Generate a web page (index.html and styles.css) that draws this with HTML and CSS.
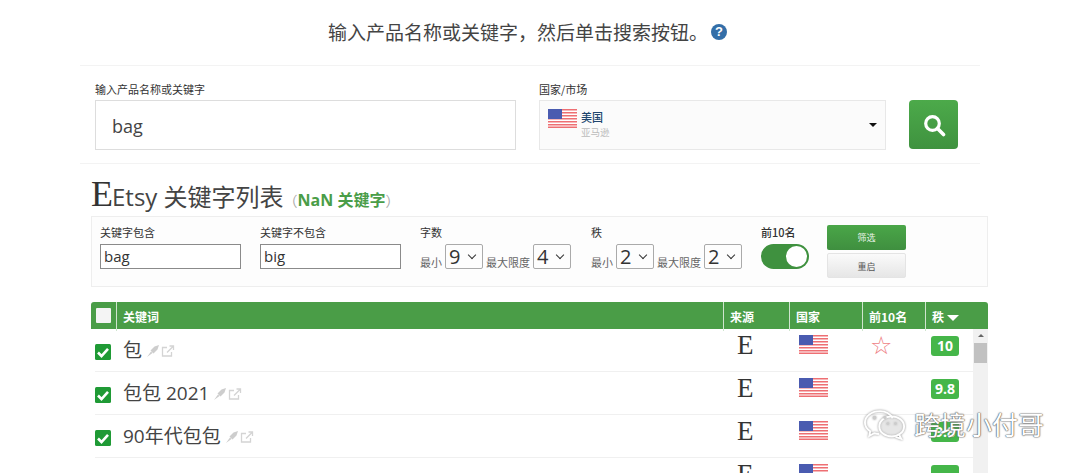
FILE: index.html
```html
<!DOCTYPE html>
<html lang="zh">
<head>
<meta charset="utf-8">
<title>Etsy 关键字列表</title>
<link rel="stylesheet" href="styles.css">
</head>
<body>
<svg class="defs" width="0" height="0" aria-hidden="true">
  <defs>
    <symbol id="flag" viewBox="0 0 29 19">
      <rect width="29" height="19" fill="#fff"/>
      <path d="M0 0h29v1.5H0zM0 3h29v1.5H0zM0 6h29v1.5H0zM0 9h29v1.5H0zM0 12h29v1.5H0zM0 15h29v1.5H0zM0 17.5h29V19H0z" fill="#ee6f73"/>
      <rect width="14" height="10" fill="#4a5bb0"/>
    </symbol>
    <symbol id="pin" viewBox="0 0 14 14">
      <path d="M13 1 8.500 2.500 4.500 6.500 7.500 9.500 11.500 5.500z M5 7.500 1 13l5.500-4z" fill="#cdcdcd"/>
    </symbol>
    <symbol id="ext" viewBox="0 0 14 14">
      <path d="M10.500 8v4h-9V3.500H6" fill="none" stroke="#d4d4d4" stroke-width="1.300"/>
      <path d="M6 8.500 12 2.500M8.500 2h4v4" fill="none" stroke="#d4d4d4" stroke-width="1.300"/>
    </symbol>
    <symbol id="check" viewBox="0 0 16 16">
      <rect width="16" height="16" rx="1.500" fill="#1f9a35"/>
      <path d="M3 8.500 6.500 12 13 4.800" fill="none" stroke="#fff" stroke-width="2.600"/>
    </symbol>
  </defs>
</svg>

<main class="page">
  <header class="intro">
    <h1 class="intro-text">输入产品名称或关键字&#xFF0C;然后单击搜索按钮。</h1>
    <span class="help">?</span>
  </header>

  <section class="search">
    <div class="field field-keyword">
      <label class="field-label">输入产品名称或关键字</label>
      <div class="text-box">bag</div>
    </div>
    <div class="field field-market">
      <label class="field-label">国家/市场</label>
      <div class="market-box">
        <svg class="flag"><use href="#flag"/></svg>
        <div class="market-text">
          <span class="market-name">美国</span>
          <span class="market-site">亚马逊</span>
        </div>
        <span class="caret"></span>
      </div>
    </div>
    <button class="search-btn" aria-label="搜索">
      <svg viewBox="0 0 24 24" width="24" height="24"><circle cx="10.500" cy="10.500" r="6.800" fill="none" stroke="#fff" stroke-width="3.200"/><path d="M15.500 15.500 21.500 21.500" stroke="#fff" stroke-width="3.600" stroke-linecap="round"/></svg>
    </button>
  </section>

  <section class="list">
    <h2 class="list-title">
      <span class="etsy-e">E</span><span>Etsy 关键字列表</span>
      <span class="count"><span class="paren">&#xFF08;</span>NaN 关键字<span class="paren">&#xFF09;</span></span>
    </h2>

    <div class="filters">
      <div class="filter filter-inc">
        <label class="filter-label">关键字包含</label>
        <div class="mini-input">bag</div>
      </div>
      <div class="filter filter-exc">
        <label class="filter-label">关键字不包含</label>
        <div class="mini-input">big</div>
      </div>
      <div class="filter filter-words">
        <label class="filter-label">字数</label>
        <div class="range">
          <span class="range-label">最小</span><span class="mini-select">9<i class="chev"></i></span>
          <span class="range-label">最大限度</span><span class="mini-select">4<i class="chev"></i></span>
        </div>
      </div>
      <div class="filter filter-rank">
        <label class="filter-label">秩</label>
        <div class="range">
          <span class="range-label">最小</span><span class="mini-select">2<i class="chev"></i></span>
          <span class="range-label">最大限度</span><span class="mini-select">2<i class="chev"></i></span>
        </div>
      </div>
      <div class="filter filter-top">
        <label class="filter-label filter-label-strong">前10名</label>
        <span class="toggle"><span class="knob"></span></span>
      </div>
      <div class="filter-actions">
        <button class="btn-apply">筛选</button>
        <button class="btn-reset">重启</button>
      </div>
    </div>

    <div class="table">
      <div class="thead">
        <div class="th th-check"><span class="head-box"></span></div>
        <div class="th">关键词</div>
        <div class="th">来源</div>
        <div class="th">国家</div>
        <div class="th">前10名</div>
        <div class="th">秩 <i class="sort"></i></div>
      </div>
      <div class="tbody">
        <div class="rows">
          <div class="row">
            <svg class="check"><use href="#check"/></svg>
            <div class="kw"><span>包</span><svg class="tool"><use href="#pin"/></svg><svg class="tool"><use href="#ext"/></svg></div>
            <div class="src">E</div>
            <svg class="flag row-flag"><use href="#flag"/></svg>
            <div class="star">☆</div>
            <div class="rank-cell"><span class="rank">10</span></div>
          </div>
          <div class="row">
            <svg class="check"><use href="#check"/></svg>
            <div class="kw"><span>包包 2021</span><svg class="tool"><use href="#pin"/></svg><svg class="tool"><use href="#ext"/></svg></div>
            <div class="src">E</div>
            <svg class="flag row-flag"><use href="#flag"/></svg>
            <div class="star"></div>
            <div class="rank-cell"><span class="rank">9.8</span></div>
          </div>
          <div class="row">
            <svg class="check"><use href="#check"/></svg>
            <div class="kw"><span>90年代包包</span><svg class="tool"><use href="#pin"/></svg><svg class="tool"><use href="#ext"/></svg></div>
            <div class="src">E</div>
            <svg class="flag row-flag"><use href="#flag"/></svg>
            <div class="star"></div>
            <div class="rank-cell"><span class="rank">9.8</span></div>
          </div>
          <div class="row">
            <svg class="check"><use href="#check"/></svg>
            <div class="kw"></div>
            <div class="src">E</div>
            <svg class="flag row-flag"><use href="#flag"/></svg>
            <div class="star"></div>
            <div class="rank-cell"><span class="rank rank-cut"></span></div>
          </div>
        </div>
        <div class="scrollbar"><span class="scroll-up"></span><span class="scroll-thumb"></span></div>
      </div>
    </div>
  </section>
</main>

<div class="watermark">
  <svg class="wm-icon" viewBox="0 0 44 32" width="42" height="31"><path d="M17 2C8 2 1 7.200 1 14c0 3.800 2.200 7 5.500 9.200L5.500 28l5.200-2.800c1.700.5 3.300.7 5 .7M30 9.500C27.500 5 22.500 2 17 2" fill="none" stroke="#fff" stroke-width="2"/><ellipse cx="29" cy="18" rx="13" ry="10.500" fill="rgba(255,255,255,.3)" stroke="#fff" stroke-width="2"/><path d="M37 27l2 4-6-2" fill="none" stroke="#fff" stroke-width="2"/><circle cx="11" cy="9" r="1.800" fill="#ccc"/><circle cx="22" cy="9" r="1.800" fill="#ccc"/><circle cx="25" cy="15" r="1.400" fill="#ccc"/><circle cx="33" cy="15" r="1.400" fill="#ccc"/></svg>
  <span class="wm-text">跨境小付哥</span>
</div>
</body>
</html>
```

FILE: styles.css
```css
* { box-sizing: border-box; }
html, body { margin: 0; height: 473px; overflow: hidden; background: #fff; }
body {
  position: relative;
  font-family: "Open Sans", "Noto Sans CJK SC", sans-serif;
  color: #333;
}
.defs { position: absolute; }
.page { width: 1080px; }

.intro {
  height: 65px;
  display: flex;
  align-items: center;
  justify-content: center;
  gap: 3px;
  padding: 0 25px 2px 0;
}
.intro-text { margin: 0; font-size: 19px; line-height: 24px; font-weight: 400; color: #444; font-family: "Noto Sans CJK SC", sans-serif; white-space: nowrap; }
.help {
  width: 16px; height: 16px; border-radius: 50%;
  background: #336ea8; color: #fff;
  font: 700 13px/16px "Liberation Sans", sans-serif;
  text-align: center;
}

.search {
  width: 900px;
  height: 99px;
  margin-left: 80px;
  border-top: 1px solid #f3f3f3;
  border-bottom: 1px solid #f3f3f3;
  padding: 16px 0 0 15px;
  display: flex;
  align-items: flex-start;
}
.field { display: flex; flex-direction: column; }
.field-keyword { width: 421px; margin-right: 23px; }
.field-market { width: 347px; margin-right: 23px; }
.field-label { font: 400 11px/15px "Noto Sans CJK SC", sans-serif; color: #333; height: 18px; }
.text-box {
  height: 50px;
  border: 1px solid #ddd;
  padding-left: 16px;
  font-size: 18px;
  line-height: 50px;
  color: #444;
}
.market-box {
  height: 50px;
  border: 1px solid #e8e8e8;
  background: #fbfbfb;
  display: flex;
  align-items: flex-start;
  padding: 8px 8px 0 8px;
  gap: 4px;
}
.flag { width: 29px; height: 19px; flex: none; }
.market-text { flex: 1; display: flex; flex-direction: column; font-family: "Noto Sans CJK SC", sans-serif; }
.market-name { font-size: 11px; line-height: 16px; color: #20466e; font-weight: 500; }
.market-site { font-size: 9.500px; line-height: 15px; color: #bbb; }
.caret {
  align-self: center; margin-top: -8px;
  border: 4px solid transparent; border-top-color: #111; border-bottom: 0;
}
.search-btn {
  width: 49px; height: 49px; margin-top: 18px;
  border: 0; border-radius: 4px; padding: 0;
  background: linear-gradient(#4caa4a, #3f923f);
  display: flex; align-items: center; justify-content: center;
}

.list { width: 897px; margin-left: 91px; }
.list-title {
  margin: 0;
  height: 52px;
  padding-top: 12px;
  display: flex;
  align-items: baseline;
  font: 400 24px/36px "Noto Sans CJK SC", "Open Sans", sans-serif;
  color: #444;
  white-space: nowrap;
}
.list-title > span:nth-child(2) { font-family: "Open Sans", "Noto Sans CJK SC", sans-serif; }
.etsy-e { font: 400 36px/36px "Liberation Serif", serif; width: 21px; color: #333; }
.count { font: 700 16px/20px "Open Sans", "Noto Sans CJK SC", sans-serif; color: #4a9d48; }
.paren { color: #aaa; font: 400 14px/20px "Noto Sans CJK SC", sans-serif; }

.filters {
  height: 71px;
  border: 1px solid #eee;
  background: #fdfdfd;
  display: flex;
  padding-top: 7px;
  padding-left: 8px;
}
.filter { display: flex; flex-direction: column; }
.filter-label { font: 400 11px/16px "Noto Sans CJK SC", sans-serif; color: #333; height: 20px; }
.filter-label-strong { font-weight: 500; }
.filter-inc { width: 160px; }
.filter-exc { width: 160px; }
.filter-words { width: 171px; }
.filter-rank { width: 170px; }
.filter-top { width: 66px; }
.mini-input {
  width: 141px; height: 25px;
  border: 1px solid #8a8a8a;
  padding-left: 3px;
  font-size: 15px; line-height: 23px; color: #333;
  background: #fff;
}
.range { display: flex; align-items: flex-end; height: 25px; gap: 3px; }
.range-label { font: 400 11px/14px "Noto Sans CJK SC", sans-serif; color: #666; white-space: nowrap; }
.mini-select {
  width: 38px; height: 25px;
  border: 1px solid #aaa;
  border-radius: 2px;
  padding-left: 3px;
  font-size: 20px; line-height: 22px; color: #333;
  display: flex; justify-content: space-between; align-items: center;
  padding-right: 7px;
}
.chev { width: 6px; height: 6px; border: solid #333; border-width: 0 1.500px 1.500px 0; transform: rotate(45deg); margin-top: -4px; }
.toggle {
  width: 48px; height: 25px; border-radius: 13px;
  background: #3f913f;
  display: flex; align-items: center; justify-content: flex-end; padding-right: 2px;
}
.knob { width: 21px; height: 21px; border-radius: 50%; background: #fff; }
.filter-actions { display: flex; flex-direction: column; gap: 3px; margin-top: 1px; }
.filter-actions button {
  width: 79px; height: 25px; padding: 0;
  font: 400 9px/25px "Noto Sans CJK SC", sans-serif;
  border-radius: 2px;
}
.btn-apply { background: linear-gradient(#4aa648, #3f8f3f); color: #e8f3e8; border: 0; }
.btn-reset { background: linear-gradient(#fafafa, #e6e6e6); color: #555; border: 1px solid #e4e4e4; }

.table { margin-top: 15px; }
.thead {
  height: 27px;
  background: #4a9d47;
  border-radius: 3px 3px 0 0;
  display: grid;
  grid-template-columns: 25px 607px 66px 73px 63px 63px;
  color: #fff;
  font: 700 12px/29px "Noto Sans CJK SC", "Open Sans", sans-serif;
}
.th { padding-left: 6px; border-left: 1px solid #cfe5ce; white-space: nowrap; }
.th-check { border-left: 0; padding: 6px 0 0 5px; }
.head-box { display: block; width: 15px; height: 15px; background: #f4f4f4; border-radius: 1px; }
.sort { display: inline-block; border: 6px solid transparent; border-top-color: #fff; border-bottom: 0; vertical-align: 1px; }

.tbody { display: flex; height: 144px; overflow: hidden; }
.rows { width: 882px; display: flex; flex-direction: column; }
.row {
  flex: none;
  height: 43px;
  margin-left: 4px;
  display: grid;
  grid-template-columns: 28px 600px 66px 73px 63px 48px;
  align-items: start;
  border-bottom: 1px solid #f0f0f0;
}
.check { width: 16px; height: 16px; margin-top: 15px; }
.kw { display: flex; align-items: center; height: 42px; font: 400 19px/24px "Noto Sans CJK SC", sans-serif; color: #444; }
.kw > span { font-family: "Open Sans", "Noto Sans CJK SC", sans-serif; }
.kw > span + .tool { margin-left: 4px; }
.tool { width: 14px; height: 14px; margin-left: 1px; margin-top: 2px; }
.src { font: 400 27px/32px "Liberation Serif", serif; color: #333; padding-left: 14px; }
.row-flag { margin-left: 10px; margin-top: 6px; }
.star { color: #ee7f86; font: 400 25px/34px "DejaVu Sans", sans-serif; padding-left: 8px; }
.rank-cell { padding: 7px 0 0 6px; }
.rank {
  display: block; width: 28px; height: 20px;
  background: #45b649; border-radius: 3px;
  color: #fff; text-align: center;
  font: 700 14px/20px "Open Sans", sans-serif;
}
.scrollbar { width: 15px; background: #f1f1f1; display: flex; flex-direction: column; align-items: center; }
.scroll-up { margin-top: 5px; border: 3px solid transparent; border-bottom-color: #666; border-top: 0; }
.scroll-thumb { width: 13px; height: 20px; background: #c1c1c1; margin-top: 6px; }

.watermark {
  position: absolute;
  left: 864px; top: 406px;
  display: flex; align-items: center; gap: 8px;
  pointer-events: none;
}
.wm-icon { filter: drop-shadow(0 0 1px #888); }
.wm-text {
  font: 400 26px/36px "Noto Sans CJK SC", sans-serif;
  color: #fff;
  text-shadow: 0 0 1px #555, 0 0 1px #555, 0 0 2px #777;
}
```
